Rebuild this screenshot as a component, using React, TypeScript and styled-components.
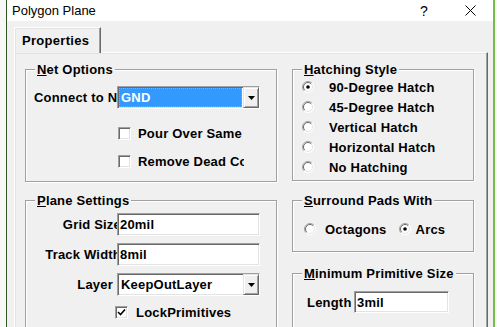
import React from 'react';
import styled, { createGlobalStyle } from 'styled-components';

const GlobalStyle = createGlobalStyle`
  html, body {
    margin: 0;
    padding: 0;
    background: #f7f7f7;
  }
  body {
    font-family: "Liberation Sans", Arial, sans-serif;
    color: #000;
  }
`;

const Window = styled.div`
  box-sizing: border-box;
  margin-left: 6px;
  width: 489px;
  height: 327px;
  overflow: hidden;
  background: #f0f0f0;
  border-left: 1px solid #2f5524;
  border-right: 2px solid #78bc48;
`;

const TitleBar = styled.div`
  display: flex;
  align-items: center;
  height: 21px;
  background: #fff;
  padding-left: 5px;
  font-size: 13px;
`;

const TitleText = styled.span`
  flex: 1;
`;

const TitleButton = styled.div`
  width: 46px;
  height: 21px;
  display: flex;
  align-items: center;
  justify-content: center;
  font-size: 14px;
`;

const TabStrip = styled.div`
  display: flex;
  padding: 6px 0 0 7px;
`;

const Tab = styled.div`
  position: relative;
  z-index: 1;
  box-sizing: border-box;
  width: 87px;
  height: 26px;
  margin-bottom: -1px;
  padding-left: 7px;
  display: flex;
  align-items: center;
  background: #f0f0f0;
  border-top: 1px solid #fff;
  border-left: 1px solid #fff;
  border-right: 1px solid #696969;
  box-shadow: inset -1px 0 0 #a0a0a0, inset 1px 1px 0 #e3e3e3;
  font-weight: bold;
  font-size: 13px;
  letter-spacing: 0.3px;
`;

const Panel = styled.div`
  box-sizing: border-box;
  margin-left: 7px;
  width: 474px;
  height: 300px;
  padding: 9px 12px 0 10px;
  display: flex;
  gap: 15px;
  border-top: 1px solid #fff;
  border-left: 1px solid #fff;
  border-right: 1px solid #696969;
  box-shadow: inset -1px 0 0 #a0a0a0, inset 1px 1px 0 #e3e3e3;
`;

const Column = styled.div<{ $w: number }>`
  display: flex;
  flex-direction: column;
  width: ${p => p.$w}px;
  flex-shrink: 0;
`;

const Group = styled.fieldset<{ $h: number; $gap?: number }>`
  box-sizing: border-box;
  margin: ${p => p.$gap ?? 0}px 0 0 0;
  padding: 0;
  min-width: 0;
  width: 100%;
  height: ${p => p.$h}px;
  flex-shrink: 0;
  border: 1px solid #a0a0a0;
  box-shadow: 1px 1px 0 #fff, inset 1px 1px 0 #fff;
`;

const Legend = styled.legend`
  margin-left: 9px;
  padding: 0 2px;
  background: #f0f0f0;
  font-weight: bold;
  font-size: 13px;
  line-height: 15px;
  letter-spacing: 0.2px;
`;

const GroupBody = styled.div<{ $pt: number; $pl: number }>`
  display: flex;
  flex-direction: column;
  padding: ${p => p.$pt}px 0 0 ${p => p.$pl}px;
`;

const Row = styled.div<{ $h?: number; $mt?: number; $pl?: number }>`
  display: flex;
  align-items: center;
  height: ${p => p.$h ?? 23}px;
  margin-top: ${p => p.$mt ?? 0}px;
  padding-left: ${p => p.$pl ?? 0}px;
  font-weight: bold;
  font-size: 13px;
  letter-spacing: 0.2px;
  white-space: nowrap;
`;

const FieldLabel = styled.div<{ $w: number; $right?: boolean }>`
  width: ${p => p.$w}px;
  flex-shrink: 0;
  display: flex;
  justify-content: ${p => (p.$right ? 'flex-end' : 'flex-start')};
  overflow: hidden;
  white-space: nowrap;
`;

const LabelText = styled.span<{ $over?: number }>`
  flex-shrink: 0;
  margin-right: ${p => -(p.$over ?? 0)}px;
`;

const Sunken = styled.div<{ $w: number; $h?: number }>`
  box-sizing: border-box;
  width: ${p => p.$w}px;
  height: ${p => p.$h ?? 23}px;
  flex-shrink: 0;
  display: flex;
  align-items: stretch;
  background: #fff;
  border: 1px solid;
  border-color: #a0a0a0 #fff #fff #a0a0a0;
  box-shadow: inset 1px 1px 0 #696969, inset -1px -1px 0 #e3e3e3;
`;

const EditText = styled.div`
  display: flex;
  align-items: center;
  padding-left: 2px;
  font-weight: bold;
  font-size: 13px;
`;

const ComboValue = styled.div<{ $selected?: boolean }>`
  flex: 1;
  display: flex;
  align-items: center;
  margin: 1px;
  padding-left: 2px;
  font-weight: bold;
  font-size: 13px;
  background: ${p => (p.$selected ? '#3399ff' : 'transparent')};
  color: ${p => (p.$selected ? '#fff' : '#000')};
  outline: ${p => (p.$selected ? '1px dotted #d29a5c' : 'none')};
  outline-offset: -1px;
`;

const ComboButton = styled.div`
  box-sizing: border-box;
  width: 16px;
  display: flex;
  align-items: center;
  justify-content: center;
  background: #f0f0f0;
  border: 1px solid;
  border-color: #e3e3e3 #696969 #696969 #e3e3e3;
  box-shadow: inset 1px 1px 0 #fff, inset -1px -1px 0 #a0a0a0;
`;

const CheckBox = styled.div`
  box-sizing: border-box;
  width: 13px;
  height: 13px;
  flex-shrink: 0;
  background: #fff;
  border: 1px solid;
  border-color: #a0a0a0 #fff #fff #a0a0a0;
  box-shadow: inset 1px 1px 0 #696969, inset -1px -1px 0 #e3e3e3;
  display: flex;
  align-items: center;
  justify-content: center;
`;

const OptionText = styled.span<{ $gap: number; $w?: number }>`
  margin-left: ${p => p.$gap}px;
  ${p => (p.$w ? `width: ${p.$w}px; overflow: hidden;` : '')}
`;

const Arrow = () => (
  <svg width="7" height="4" viewBox="0 0 7 4">
    <path d="M0 0H7L3.5 4Z" fill="#000" />
  </svg>
);

const Radio = ({ checked, ml = 0 }: { checked?: boolean; ml?: number }) => (
  <svg width="12" height="12" viewBox="0 0 12 12" style={{ marginLeft: ml, flexShrink: 0 }}>
    <circle cx="6" cy="6" r="5.5" fill="#fff" />
    <path d="M9.9 2.1A5.5 5.5 0 0 0 2.1 9.9" stroke="#a0a0a0" fill="none" />
    <path d="M9.2 2.8A4.5 4.5 0 0 0 2.8 9.2" stroke="#696969" fill="none" />
    <path d="M2.1 9.9A5.5 5.5 0 0 0 9.9 2.1" stroke="#fff" fill="none" />
    <path d="M2.8 9.2A4.5 4.5 0 0 0 9.2 2.8" stroke="#e3e3e3" fill="none" />
    {checked && <circle cx="6" cy="6" r="1.8" fill="#000" />}
  </svg>
);

const Check = () => (
  <svg width="9" height="9" viewBox="0 0 9 9">
    <path d="M1 4L3.5 6.5L8 1.5" stroke="#000" strokeWidth="1.6" fill="none" />
  </svg>
);

const Combo = ({ value, selected }: { value: string; selected?: boolean }) => (
  <Sunken $w={143}>
    <ComboValue $selected={selected}>{value}</ComboValue>
    <ComboButton>
      <Arrow />
    </ComboButton>
  </Sunken>
);

const Edit = ({ value, w }: { value: string; w: number }) => (
  <Sunken $w={w}>
    <EditText>{value}</EditText>
  </Sunken>
);

const hatching = [
  { label: '90-Degree Hatch', checked: true },
  { label: '45-Degree Hatch' },
  { label: 'Vertical Hatch' },
  { label: 'Horizontal Hatch' },
  { label: 'No Hatching' },
];

export default function App() {
  return (
    <>
      <GlobalStyle />
      <Window>
        <TitleBar>
          <TitleText>Polygon Plane</TitleText>
          <TitleButton>?</TitleButton>
          <TitleButton>
            <svg width="11" height="11" viewBox="0 0 11 11">
              <path d="M0.5 0.5L10.5 10.5M10.5 0.5L0.5 10.5" stroke="#000" strokeWidth="1" />
            </svg>
          </TitleButton>
        </TitleBar>

        <TabStrip>
          <Tab>Properties</Tab>
        </TabStrip>

        <Panel>
          <Column $w={252}>
            <Group $h={120}>
              <Legend>
                <u>N</u>et Options
              </Legend>
              <GroupBody $pt={9} $pl={8}>
                <Row>
                  <FieldLabel $w={83}>
                    <LabelText>Connect to Net</LabelText>
                  </FieldLabel>
                  <Combo value="GND" selected />
                </Row>
                <Row $h={28} $mt={10} $pl={84}>
                  <CheckBox />
                  <OptionText $gap={7} $w={112}>Pour Over Same</OptionText>
                </Row>
                <Row $h={28} $pl={84}>
                  <CheckBox />
                  <OptionText $gap={7} $w={106}>Remove Dead Copper</OptionText>
                </Row>
              </GroupBody>
            </Group>

            <Group $h={160} $gap={11}>
              <Legend>
                <u>P</u>lane Settings
              </Legend>
              <GroupBody $pt={5} $pl={8}>
                <Row>
                  <FieldLabel $w={83} $right>
                    <LabelText $over={4}>Grid Size</LabelText>
                  </FieldLabel>
                  <Edit value="20mil" w={143} />
                </Row>
                <Row $mt={7}>
                  <FieldLabel $w={83} $right>
                    <LabelText $over={4}>Track Width</LabelText>
                  </FieldLabel>
                  <Edit value="8mil" w={143} />
                </Row>
                <Row $mt={7}>
                  <FieldLabel $w={83} $right>
                    <LabelText $over={-4}>Layer</LabelText>
                  </FieldLabel>
                  <Combo value="KeepOutLayer" />
                </Row>
                <Row $h={16} $mt={8} $pl={81}>
                  <CheckBox>
                    <Check />
                  </CheckBox>
                  <OptionText $gap={8}>LockPrimitives</OptionText>
                </Row>
              </GroupBody>
            </Group>
          </Column>

          <Column $w={182}>
            <Group $h={119}>
              <Legend>
                <u>H</u>atching Style
              </Legend>
              <GroupBody $pt={0} $pl={9}>
                {hatching.map(h => (
                  <Row key={h.label} $h={20}>
                    <Radio checked={h.checked} />
                    <OptionText $gap={15}>{h.label}</OptionText>
                  </Row>
                ))}
              </GroupBody>
            </Group>

            <Group $h={59} $gap={12}>
              <Legend>
                <u>S</u>urround Pads With
              </Legend>
              <GroupBody $pt={11} $pl={11}>
                <Row $h={20}>
                  <Radio />
                  <OptionText $gap={9}>Octagons</OptionText>
                  <Radio checked ml={12} />
                  <OptionText $gap={5}>Arcs</OptionText>
                </Row>
              </GroupBody>
            </Group>

            <Group $h={80} $gap={14}>
              <Legend>
                <u>M</u>inimum Primitive Size
              </Legend>
              <GroupBody $pt={10} $pl={14}>
                <Row $h={22}>
                  <FieldLabel $w={47}>
                    <LabelText>Length</LabelText>
                  </FieldLabel>
                  <Sunken $w={95} $h={22}>
                    <EditText>3mil</EditText>
                  </Sunken>
                </Row>
              </GroupBody>
            </Group>
          </Column>
        </Panel>
      </Window>
    </>
  );
}
